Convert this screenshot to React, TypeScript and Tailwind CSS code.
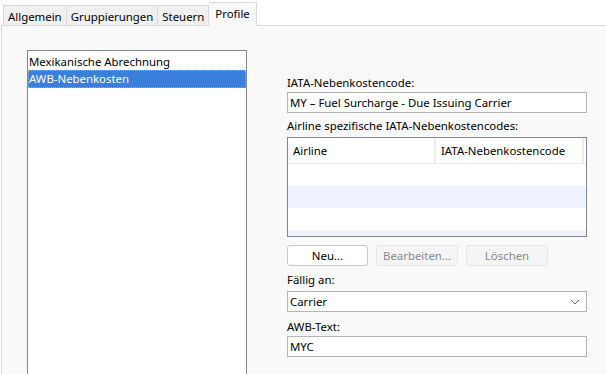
const font = { fontFamily: '"Segoe UI", "Noto Sans", sans-serif' };

function Tab({ label, active }: { label: string; active?: boolean }) {
  if (active) {
    return (
      <div className="relative z-10 -mb-px h-[24px] border border-b-0 border-[#d9d9d9] bg-[#f9f9f9] px-[6px] pt-[3px] text-[11.4px] leading-[16px] text-black">
        {label}
      </div>
    );
  }
  return (
    <div className="mt-[2px] h-[20px] border border-b-0 border-[#d9d9d9] bg-[#f0f0f0] px-[4px] pt-[3px] text-[11.4px] leading-[16px] text-black [&+div]:border-l-0">
      {label}
    </div>
  );
}

function Field({ value, select }: { value: string; select?: boolean }) {
  return (
    <div className="flex h-[21px] items-center justify-between border border-[#b4b4b4] bg-white px-[2px] text-[11.4px] text-black">
      <span>{value}</span>
      {select && (
        <svg width="10" height="6" viewBox="0 0 10 6" className="mr-[4px]">
          <path d="M1 1 L5 5 L9 1" fill="none" stroke="#606060" strokeWidth="1" />
        </svg>
      )}
    </div>
  );
}

function Btn({ label, enabled }: { label: string; enabled?: boolean }) {
  return enabled ? (
    <div className="flex h-[21px] w-[81px] items-center justify-center rounded-[3px] border border-[#c8c8c8] bg-white text-[11.4px] text-black">
      {label}
    </div>
  ) : (
    <div className="flex h-[21px] w-[82px] items-center justify-center rounded-[3px] border border-[#e6e6e6] bg-[#f5f5f5] text-[11.4px] text-[#8a8a8a]">
      {label}
    </div>
  );
}

export default function App() {
  return (
    <div className="h-[374px] w-[606px] overflow-hidden bg-white" style={font}>
      <div className="flex items-end pl-[3px] pt-[2px]">
        <Tab label="Allgemein" />
        <Tab label="Gruppierungen" />
        <Tab label="Steuern" />
        <Tab label="Profile" active />
      </div>
      <div className="ml-[1px] flex h-[360px] border-l border-t border-[#d9d9d9] bg-[#f9f9f9] pl-[25px] pt-[24px]">
        <div className="h-[340px] w-[220px] border border-[#828790] bg-white pt-[2px] text-[11.4px] text-black">
          <div className="h-[17px] pl-[1px] leading-[17px]">Mexikanische Abrechnung</div>
          <div className="h-[18px] border border-dotted border-[#f0a030] bg-[#3b7fdc] leading-[16px] text-white">
            AWB-Nebenkosten
          </div>
        </div>
        <div className="ml-[40px] mt-[25px] flex w-[300px] flex-col text-[11.4px] text-black">
          <div className="h-[17px] leading-[16px]">IATA-Nebenkostencode:</div>
          <Field value="MY – Fuel Surcharge - Due Issuing Carrier" />
          <div className="mt-[13px] h-[11px] leading-[0px]">Airline spezifische IATA-Nebenkostencodes:</div>
          <div className="h-[100px] overflow-hidden border border-[#828790] bg-white">
            <div className="flex h-[26px] border-b border-[#ececec]">
              <div className="w-[148px] border-r-2 border-[#ececec] pl-[5px] leading-[26px]">Airline</div>
              <div className="w-[148px] border-r-2 border-[#ececec] pl-[5px] leading-[26px]">IATA-Nebenkostencode</div>
            </div>
            <div className="h-[22px] bg-white" />
            <div className="h-[22px] bg-[#eef3fd]" />
            <div className="h-[22px] bg-white" />
            <div className="h-[22px] bg-[#eef3fd]" />
          </div>
          <div className="mt-[8px] flex gap-[8px]">
            <Btn label="Neu..." enabled />
            <Btn label="Bearbeiten..." />
            <Btn label="Löschen" />
          </div>
          <div className="mt-[5px] h-[18px] leading-[18px]">Fällig an:</div>
          <div className="mt-[2px]">
            <Field value="Carrier" select />
          </div>
          <div className="mt-[7px] h-[17px] leading-[16px]">AWB-Text:</div>
          <Field value="MYC" />
        </div>
      </div>
    </div>
  );
}
